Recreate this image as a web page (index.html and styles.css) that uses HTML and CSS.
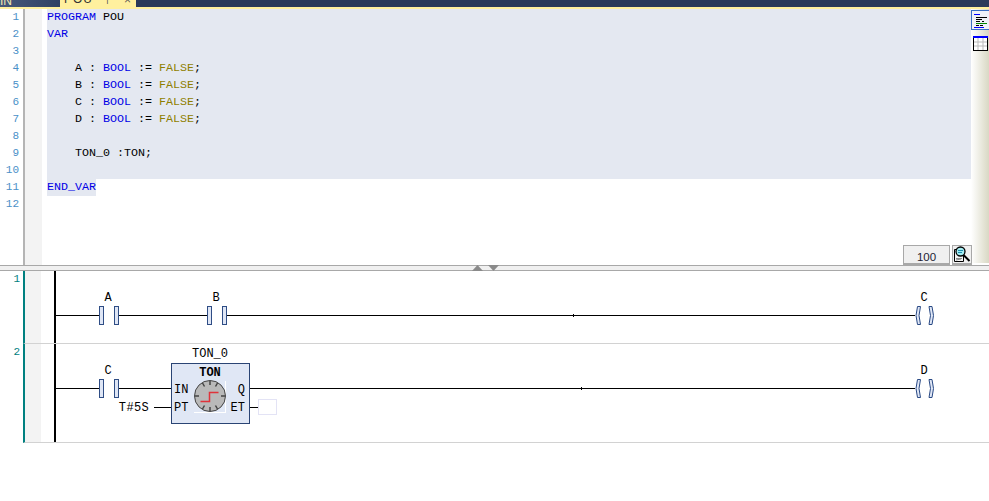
FILE: index.html
```html
<!DOCTYPE html>
<html lang="en">
<head>
<meta charset="utf-8">
<title>POU</title>
<link rel="stylesheet" href="styles.css">
</head>
<body>
<header class="titlebar">
  <span class="crumb">IN</span>
  <div class="tab"><span class="tab-name">POU</span><span class="tab-pin">⊢</span><span class="tab-close">×</span></div>
</header>
<section class="editor">
  <div class="numbers">
    <div class="num">1</div><div class="num">2</div><div class="num">3</div><div class="num">4</div><div class="num">5</div><div class="num">6</div><div class="num">7</div><div class="num">8</div><div class="num">9</div><div class="num">10</div><div class="num">11</div><div class="num">12</div>
  </div>
  <div class="fold"></div>
  <div class="code">
    <div class="line sel"><span class="kw">PROGRAM</span> POU</div>
    <div class="line sel"><span class="kw">VAR</span></div>
    <div class="line sel"></div>
    <div class="line sel">    A : <span class="kw">BOOL</span> := <span class="lit">FALSE</span>;</div>
    <div class="line sel">    B : <span class="kw">BOOL</span> := <span class="lit">FALSE</span>;</div>
    <div class="line sel">    C : <span class="kw">BOOL</span> := <span class="lit">FALSE</span>;</div>
    <div class="line sel">    D : <span class="kw">BOOL</span> := <span class="lit">FALSE</span>;</div>
    <div class="line sel"></div>
    <div class="line sel">    TON_0 :TON;</div>
    <div class="line sel"></div>
    <div class="line"><span class="kw sel">END_VAR</span></div>
    <div class="line"></div>
  </div>
  <aside class="side">
    <button class="side-btn active" aria-label="Text view">
      <svg width="16" height="15" viewBox="0 0 16 15"><path d="M1 1.500h6" stroke="#00f"/><path d="M3 4.500h8M11 4.500h3M3 6.500h6M3 8.500h4M9 8.500h2M3 12.500h3M7 12.500h3" stroke="#000" fill="none"/><path d="M3 10.500h11" stroke="#080"/><path d="M1 14.500h10" stroke="#00f"/></svg>
    </button>
    <button class="side-btn" aria-label="Table view">
      <svg width="15" height="15" viewBox="0 0 15 15"><rect x=".5" y=".5" width="14" height="14" fill="#fff" stroke="#000"/><rect width="15" height="2" fill="#00f"/><path d="M5 2v12M10 2v12M1 6h13M1 10h13" stroke="#bbb" fill="none"/></svg>
    </button>
  </aside>
  <div class="zoom">
    <div class="zoom-value">100</div>
    <div class="zoom-btn">
      <svg width="18" height="17" viewBox="0 0 18 17"><path d="M1.500 3.500h9v12h-9z" fill="#f4f4f4" stroke="#000"/><path d="M3 12.500h6M3 14l5-1" stroke="#888"/><circle cx="7.500" cy="5.500" r="4.500" fill="#a4ecf2" stroke="#000" stroke-width="1.300"/><path d="M5 4.500h5M5 6.500h4" stroke="#1e8fb0"/><path d="M10.500 9l6 6" stroke="#000" stroke-width="2"/></svg>
    </div>
  </div>
</section>
<div class="splitter">
  <svg class="arrow" width="11" height="6" viewBox="0 0 11 6"><path d="M5.500 0L11 6H0z" fill="#8a8a8a"/></svg>
  <svg class="arrow" width="11" height="6" viewBox="0 0 11 6"><path d="M0 0h11L5.500 6z" fill="#8a8a8a"/></svg>
</div>
<section class="ladder">
  <div class="network net-one">
    <div class="net-num">1</div>
    <svg class="net-svg" width="948" height="72" viewBox="41 271 948 72">
      <path class="rail" d="M55 271v72"/>
      <path class="wire" d="M56 315.500h43M118 315.500h89M226 315.500h689"/>
      <path class="wire" d="M573.500 314v3"/>
      <rect class="contact" x="99.500" y="306.500" width="4" height="18"/><rect class="contact" x="114.500" y="306.500" width="4" height="18"/>
      <rect class="contact" x="207.500" y="306.500" width="4" height="18"/><rect class="contact" x="222.500" y="306.500" width="4" height="18"/>
      <path class="coil" d="M917.500 306.500h3q-3 9 0 18h-3q-3-9 0-18zM929 306.500h3q3 9 0 18h-3q3-9 0-18z"/>
      <text class="lbl" x="108" y="301" text-anchor="middle">A</text>
      <text class="lbl" x="216" y="301" text-anchor="middle">B</text>
      <text class="lbl" x="924" y="301" text-anchor="middle">C</text>
    </svg>
  </div>
  <div class="network net-two">
    <div class="net-num">2</div>
    <svg class="net-svg" width="948" height="98" viewBox="41 344 948 98">
      <path class="rail" d="M55 344v98"/>
      <path class="wire" d="M56 388.500h43M118 388.500h53M250 388.500h665M581.500 387v3"/>
      <path class="wire" d="M154 407.500h17M250 407.500h8"/>
      <rect class="contact" x="99.500" y="379.500" width="4" height="18"/><rect class="contact" x="114.500" y="379.500" width="4" height="18"/>
      <path class="coil" d="M917.500 379.500h3q-3 9 0 18h-3q-3-9 0-18zM929 379.500h3q3 9 0 18h-3q3-9 0-18z"/>
      <text class="lbl" x="108" y="374" text-anchor="middle">C</text>
      <text class="lbl" x="924" y="374" text-anchor="middle">D</text>
      <text class="lbl" x="210" y="357" text-anchor="middle">TON_0</text>
      <text class="lbl wide" x="134" y="411" text-anchor="middle">T#5S</text>
      <rect class="fb" x="171.500" y="363.500" width="78" height="60"/>
      <text class="lbl bold" x="210" y="376" text-anchor="middle">TON</text>
      <text class="lbl" x="174" y="393">IN</text>
      <text class="lbl" x="174" y="411">PT</text>
      <text class="lbl" x="245" y="393" text-anchor="end">Q</text>
      <text class="lbl" x="245" y="411" text-anchor="end">ET</text>
      <path d="M194 412.500h32M225.500 381v32" stroke="#fff" fill="none"/>
      <circle cx="210" cy="396" r="15.500" fill="#b9b9b9" stroke="#444"/>
      <path d="M210 381v4M210 407v4M195 396h4M221 396h4M202.500 383l2 3.500M217.500 383l-2 3.500M202.500 409l2-3.500M217.500 409l-2-3.500" stroke="#444" stroke-width="1.500"/>
      <path d="M200.500 401.500h9v-9h9" stroke="#e0333a" stroke-width="1.500" fill="none"/>
      <rect x="258.500" y="399.500" width="18" height="15" fill="#fff" stroke="#e3e3f5"/>
    </svg>
  </div>
</section>
</body>
</html>
```
FILE: styles.css
```css
* { box-sizing: border-box; }
html, body { margin: 0; padding: 0; }
body {
  width: 989px;
  height: 501px;
  overflow: hidden;
  background: #fff;
  font-family: "Liberation Mono", monospace;
  font-size: 11.67px;
  color: #000;
}
.titlebar {
  height: 9px;
  display: flex;
  background: #2a3a5a;
  border-bottom: 2px solid #fff09e;
  overflow: hidden;
}
.crumb {
  width: 60px;
  height: 15px;
  margin-top: -8px;
  padding-top: 3px;
  background: linear-gradient(90deg, #47597c, #2f4163);
  color: #f2e9b0;
  font: 12px/1 "Liberation Sans", sans-serif;
}
.tab {
  width: 76px;
  height: 7px;
  display: flex;
  padding-left: 4px;
  background: #fff09e;
  color: #333;
  font: 12px/1 "Liberation Sans", sans-serif;
}
.tab-name { width: 42px; margin-top: -7px; letter-spacing: 1px; }
.tab-pin { width: 18px; margin-top: -6px; color: #555; }
.tab-close { margin-top: -6px; color: #555; }
.editor {
  height: 256px;
  display: flex;
  position: relative;
}
.numbers {
  width: 25px;
  padding-right: 4px;
  border-right: 2px solid #b4b4b4;
  text-align: right;
  color: #4a90c8;
  font-size: 11px;
}
.num { height: 17px; line-height: 17px; }
.fold { width: 17px; background: #f3f3f3; }
.code {
  width: 929px;
  padding-left: 5px;
}
.line { height: 17px; line-height: 17px; white-space: pre; }
.sel { background: #e4e8f1; }
.kw { color: #0000e6; }
.kw.sel { display: inline-block; height: 17px; }
.lit { color: #8f7f00; }
.side {
  width: 18px;
  height: 254px;
  background: linear-gradient(90deg, #ffffff, #d9d8c4);
  display: flex;
  flex-direction: column;
  gap: 3px;
  padding-top: 1px;
}
.side-btn {
  width: 18px;
  height: 20px;
  padding: 0 0 0 1px;
  border: 0;
  background: none;
  display: flex;
  align-items: center;
  justify-content: center;
}
.side-btn.active {
  background: #eef1f8;
  border: 1px solid #3a6fc4;
  border-right: 0;
}
.zoom {
  position: absolute;
  left: 903px;
  top: 236px;
  display: flex;
  gap: 2px;
  height: 20px;
}
.zoom-value {
  width: 47px;
  height: 20px;
  background: #f0f0f0;
  border: 1px solid #a8a8a8;
  border-bottom-width: 2px;
  text-align: center;
  font: 11.5px/22px "Liberation Sans", sans-serif;
  color: #223;
}
.zoom-btn {
  width: 20px;
  height: 20px;
  background: #f0f0f0;
  border: 1px solid #a8a8a8;
  border-bottom-width: 2px;
  overflow: hidden;
}
.zoom-btn svg { display: block; }
.splitter {
  height: 6px;
  background: #f0f0f0;
  border-top: 1px solid #a8a8a8;
  border-bottom: 1px solid #a8a8a8;
  display: flex;
  justify-content: center;
  gap: 5px;
}
.arrow { margin-top: -1px; margin-left: -9px; margin-right: 9px; }
.ladder { display: flex; flex-direction: column; }
.network {
  margin-left: 23px;
  border-left: 2px solid #008080;
  position: relative;
  display: flex;
  border-bottom: 1px solid #d2d2d2;
  background: linear-gradient(90deg, #f3f3f3 16px, #fff 16px);
}
.net-one { height: 73px; }
.net-two { height: 99px; }
.net-svg { display: block; margin-left: 16px; }
.net-num {
  position: absolute;
  left: -20px;
  top: 2px;
  width: 15px;
  text-align: right;
  color: #008080;
  font-size: 11px;
}
.rail { stroke: #000; stroke-width: 2; fill: none; }
.wire { stroke: #000; stroke-width: 1; fill: none; }
.contact { fill: #dfe6f5; stroke: #2f4d85; stroke-width: 1; }
.coil { fill: #dfe6f5; stroke: #2a4a85; stroke-width: 1; }
.fb { fill: #e0e7f5; stroke: #2a4474; stroke-width: 1; }
.lbl { font-family: "Liberation Mono", monospace; font-size: 12px; fill: #000; }
.wide { letter-spacing: .4px; }
.bold { font-weight: bold; }
```
